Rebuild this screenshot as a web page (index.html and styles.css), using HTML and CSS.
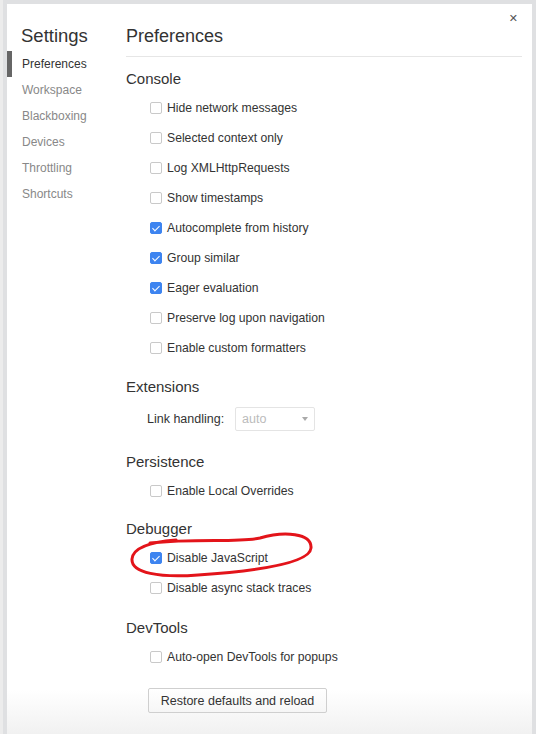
FILE: index.html
```html
<!DOCTYPE html>
<html lang="en">
<head>
    <meta charset="UTF-8">
    <meta name="viewport" content="width=device-width, initial-scale=1.0">
    <title>Settings</title>
    <link rel="stylesheet" href="styles.css">
</head>
<body>

    <div class="dialog">
        <button class="close">&#x2715;</button>

        <aside class="sidebar">
            <div class="title">Settings</div>
            <ul class="nav">
                <li class="active">Preferences</li>
                <li>Workspace</li>
                <li>Blackboxing</li>
                <li>Devices</li>
                <li>Throttling</li>
                <li>Shortcuts</li>
            </ul>
        </aside>

        <main class="content">
            <h1>Preferences</h1>

            <section class="group console">
                <h2>Console</h2>
                <label class="row"><span class="box"></span>Hide network messages</label>
                <label class="row"><span class="box"></span>Selected context only</label>
                <label class="row"><span class="box"></span>Log XMLHttpRequests</label>
                <label class="row"><span class="box"></span>Show timestamps</label>
                <label class="row"><span class="box checked"></span>Autocomplete from history</label>
                <label class="row"><span class="box checked"></span>Group similar</label>
                <label class="row"><span class="box checked"></span>Eager evaluation</label>
                <label class="row"><span class="box"></span>Preserve log upon navigation</label>
                <label class="row"><span class="box"></span>Enable custom formatters</label>
            </section>

            <section class="group">
                <h2>Extensions</h2>
                <div class="row select-row">
                    <span class="select-label">Link handling:</span>
                    <span class="select">auto<span class="arrow"></span></span>
                </div>
            </section>

            <section class="group persistence">
                <h2>Persistence</h2>
                <label class="row"><span class="box"></span>Enable Local Overrides</label>
            </section>

            <section class="group debugger">
                <h2>Debugger</h2>
                <label class="row"><span class="box checked"></span>Disable JavaScript</label>
                <label class="row"><span class="box"></span>Disable async stack traces</label>
            </section>

            <section class="group devtools">
                <h2>DevTools</h2>
                <label class="row"><span class="box"></span>Auto-open DevTools for popups</label>
            </section>

            <button class="restore">Restore defaults and reload</button>
        </main>

        <!-- hand-drawn marker around the option -->
        <svg class="scribble" width="200" height="56" viewBox="0 0 200 56">
            <path d="M22 13 C70 8 110 13 132 8 C156 1 184 3 183 18 C182 33 130 41 70 45 C32 48 3 43 4 29 C5 18 22 12 48 10"
                  fill="none" stroke="#e3141a" stroke-width="3" stroke-linecap="round"/>
        </svg>
    </div>

</body>
</html>
```

FILE: styles.css
```css
* {
    margin: 0;
    padding: 0;
    box-sizing: border-box;
}

html, body {
    height: 100%;
}

body {
    font-family: "Liberation Sans", Arial, sans-serif;
    background-color: #dfe0e2;
    color: #333;
    padding: 4px 4px 0 4px;
    border-left: 3px solid #ececec;
}

.dialog {
    position: relative;
    display: flex;
    height: 100%;
    background: linear-gradient(to bottom, #fff 0, #fff 94%, #f1f1f1 100%);
}

.close {
    position: absolute;
    top: 8px;
    right: 14px;
    border: none;
    background: none;
    color: #555;
    font-size: 11px;
    font-weight: bold;
    font-family: "DejaVu Sans", sans-serif;
}

.sidebar {
    width: 119px;
    flex-shrink: 0;
}

.sidebar .title {
    font-size: 18.5px;
    line-height: 24px;
    padding: 20px 0 0 14px;
    height: 47px;
    color: #333;
}

.nav {
    list-style: none;
}

.nav li {
    height: 26px;
    line-height: 26px;
    font-size: 12px;
    color: #888;
    padding-left: 10px;
    border-left: 5px solid transparent;
}

.nav li.active {
    color: #333;
    border-left-color: #666;
}

.content {
    flex: 1;
    padding: 20px 10px 0 0;
}

.content h1 {
    font-size: 18px;
    font-weight: normal;
    line-height: 24px;
    padding-bottom: 8px;
    border-bottom: 1px solid #e6e6e6;
}

.group h2 {
    font-size: 15px;
    font-weight: normal;
    line-height: 20px;
    margin: 14px 0 4px;
}

.console h2 {
    margin-top: 12px;
}

.persistence h2 {
    margin-top: 18px;
}

.debugger h2 {
    margin-top: 13px;
}

.devtools h2 {
    margin-top: 15px;
}

.row {
    display: flex;
    align-items: center;
    height: 30px;
    padding-left: 24px;
    font-size: 12.2px;
    color: #333;
}

.box {
    width: 12px;
    height: 12px;
    border: 1px solid #c9c9c9;
    border-radius: 2px;
    margin-right: 5px;
    background: #fff;
    position: relative;
}

.box.checked {
    background: #3d84f0;
    border-color: #3d84f0;
}

.box.checked::after {
    content: "";
    position: absolute;
    left: 3px;
    top: 1px;
    width: 3px;
    height: 6px;
    border: solid #fff;
    border-width: 0 1.5px 1.5px 0;
    transform: rotate(45deg);
}

.select-row {
    padding-left: 21px;
    margin-top: 7px;
    height: 30px;
    font-size: 12.5px;
}

.select-label {
    width: 88px;
}

.select {
    position: relative;
    width: 80px;
    height: 24px;
    line-height: 22px;
    border: 1px solid #e4e4e4;
    border-radius: 2px;
    color: #bbb;
    padding-left: 6px;
}

.select .arrow {
    position: absolute;
    right: 6px;
    top: 9px;
    border: 3px solid transparent;
    border-top: 4px solid #aaa;
}

.restore {
    margin: 16px 0 0 22px;
    width: 179px;
    height: 25px;
    font-family: "Liberation Sans", Arial, sans-serif;
    font-size: 12.5px;
    color: #333;
    background: linear-gradient(#fff, #f6f6f6);
    border: 1px solid #cfcfcf;
    border-radius: 2px;
}

.scribble {
    position: absolute;
    left: 121px;
    top: 526px;
}
```
